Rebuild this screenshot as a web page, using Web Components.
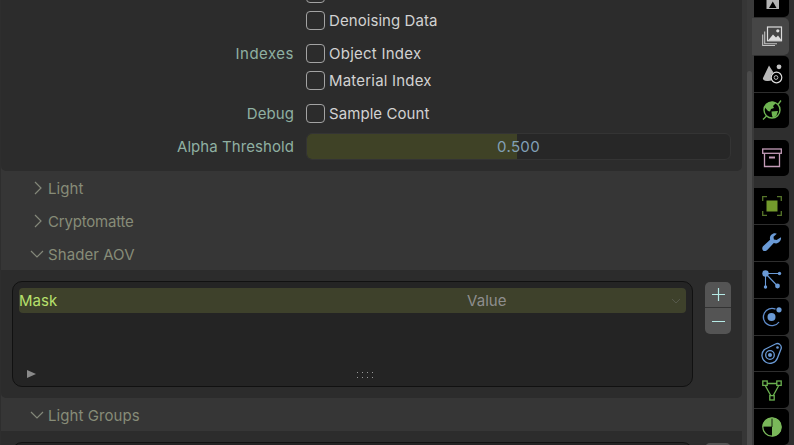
<!DOCTYPE html>
<html>
<head>
<meta charset="utf-8">
<style>
  html, body { margin: 0; height: 100%; background: #2e2e2e; overflow: hidden; }
</style>
</head>
<body>
<blender-props></blender-props>
<script>
const ICONS = {
  render: `<path d="M4.500 5h12.500v15H4.500z" fill="#b4b4b4"/><path d="M7 5h7.500l-3.700 5.500z" fill="#000"/><path d="M10.800 12.500l3.700 6.500H7z" fill="#000"/>`,
  output: `<path d="M2.700 5.500v12.300H15M.7 8.500v11H13" fill="none" stroke="#c4c4c4" stroke-width="1.100"/><rect x="5.500" y="1" width="14" height="13.800" fill="none" stroke="#dcdcdc" stroke-width="1.200"/><path d="M6 14.500l5-6 3 3 2-2 3 4v1H6z" fill="#dcdcdc"/><circle cx="15.800" cy="4.800" r="1.600" fill="#dcdcdc"/>`,
  scene: `<path d="M7 1.500 1 14c-.5 1.500 1 2.800 4 3 2 .2 3.500-.2 4.500-.7-1.300-3-.8-6 1.800-8z" fill="#b8b8b8"/><circle cx="17" cy="2.800" r="2.400" fill="#c4c4c4"/><circle cx="14.500" cy="13.500" r="5.300" fill="none" stroke="#dcdcdc" stroke-width="1.200"/><circle cx="14" cy="13.500" r="1.900" fill="none" stroke="#b8b8b8" stroke-width="1"/>`,
  world: `<circle cx="10" cy="10" r="8" fill="none" stroke="#6fb552" stroke-width="1.400"/><path d="M4 4.500c2-2 5-3 7.500-2.800l2 1.800-2.500 2.500 1 2-3 1-1 2.500-2-.5-3.500-4zM9.500 11.500l6.500-.5-1.500 4.500-3.500 2.500-1-2.500z" fill="#6fb552"/><path d="M16 4.500l3-4M1 19.500l3.500-3.500" stroke="#6fb552" stroke-width="1.300"/>`,
  collection: `<g fill="none" stroke="#c49cb8" stroke-width="1.300"><rect x=".7" y="1" width="18.600" height="4.300"/><path d="M2.500 5.500V18.500h15V5.500"/></g><rect x="7" y="8.500" width="6" height="2" fill="#c49cb8"/>`,
  object: `<rect x="4.500" y="4.500" width="11" height="11" fill="#739a2c"/><path d="M.7 5V.7H5M15 .7h4.300V5M19.300 15v4.300H15M5 19.300H.7V15" fill="none" stroke="#56752a" stroke-width="1.300"/>`,
  modifier: `<path d="M19 4.200c.5 3-1.700 6-4.900 6.200-1 0-1.700-.1-2.300-.4L5.500 16.800c-1.300 1.500-3.700 1.700-4.700.4-1-1.400-.6-3.200.8-4.400l6.500-6C7.200 3.500 9.500.3 13 .3c.8 0 1.300.2 1.800.5l-3.300 3 .4 2.600 2.700.5z" fill="#6a9ad6"/>`,
  particles: `<g stroke="#6a9ad6" stroke-width="1.100" fill="#6a9ad6"><path d="M3.500 3.500H18M3.500 3.500V17M3.500 3.500 15.500 16" fill="none"/><circle cx="3.500" cy="3.500" r="3.200" stroke="none"/><circle cx="17.500" cy="3.500" r="1.700" stroke="none"/><circle cx="3.500" cy="17" r="1.700" stroke="none"/><circle cx="15.500" cy="16" r="2.400" stroke="none"/></g>`,
  physics: `<path d="M13.500 2.200A8.600 8.600 0 1 0 17 15" fill="none" stroke="#5f8ccb" stroke-width="1.300"/><circle cx="9.500" cy="10" r="4" fill="#6a9ad6"/><circle cx="17" cy="2.800" r="2.600" fill="#6a9ad6"/>`,
  constraints: `<path d="M2.500 6.500 13.500 1a4 4 0 0 1 5.500 5L15.500 15A8 8 0 1 1 2.500 6.500z" fill="none" stroke="#6a9ad6" stroke-width="1.300"/><circle cx="8" cy="12" r="4.300" fill="none" stroke="#6a9ad6" stroke-width="1.300"/><circle cx="8" cy="12" r="2" fill="#6a9ad6"/><circle cx="15.500" cy="4.500" r="1.300" fill="#6a9ad6"/>`,
  data: `<g fill="none" stroke="#6bb150" stroke-width="1.300"><path d="M5 3.500h10M3.500 6l5.500 10M16.500 6l-5.500 10"/><rect x=".8" y="1" width="4.400" height="4.400"/><rect x="14.800" y="1" width="4.400" height="4.400"/><rect x="7.800" y="15.600" width="4.400" height="4.400"/></g>`,
  material: `<path d="M10 .5A9.500 9.500 0 0 0 .5 10H10zM10 .5A9.500 9.500 0 0 1 19.500 10H10zM19.500 10A9.500 9.500 0 0 1 10 19.500V10z" fill="#7ab85a"/><path d="M10 1v9M1 10h9" stroke="#000" stroke-width=".8"/><circle cx="10" cy="10" r="9.200" fill="none" stroke="#7ab85a" stroke-width="1.200"/>`
};

// one row: right aligned label, control on the right
class PropRow extends HTMLElement {
  constructor() {
    super();
    this.attachShadow({ mode: "open" }).innerHTML = `
      <style>
        :host { display: grid; grid-template-columns: 293px 1fr; column-gap: 12px; align-items: center; }
        .label { text-align: right; color: #8fb0a2; }
      </style>
      <div class="label"><slot name="label"></slot></div>
      <slot></slot>`;
  }
}

class PropCheck extends HTMLElement {
  constructor() {
    super();
    this.attachShadow({ mode: "open" }).innerHTML = `
      <style>
        :host { display: flex; align-items: center; gap: 4px; color: #d2d2d2; height: 19px; }
        .box { width: 17px; height: 17px; border: 1px solid #a3a3a3; border-radius: 4px; flex: none; }
      </style>
      <span class="box"></span><slot></slot>`;
  }
}

class PropSlider extends HTMLElement {
  constructor() {
    super();
    this.attachShadow({ mode: "open" }).innerHTML = `
      <style>
        :host { display: block; position: relative; height: 27px; box-sizing: border-box; border: 1px solid #343434; border-radius: 6px; background: #272727; overflow: hidden; }
        .fill { height: 100%; width: 210px; background: #3f4226; }
        .value { position: absolute; inset: 0; display: flex; align-items: center; justify-content: center; color: #82a0b6; letter-spacing: .35px; }
      </style>
      <div class="fill"></div><div class="value"><slot></slot></div>`;
  }
}

class PanelHeader extends HTMLElement {
  constructor() {
    super();
    const open = this.hasAttribute("open");
    this.attachShadow({ mode: "open" }).innerHTML = `
      <style>
        :host { display: flex; align-items: center; height: 33px; box-sizing: border-box; padding: 1px 0 0 29px; color: #878c78; }
        svg { width: 14px; height: 14px; margin-right: 4px; flex: none; }
      </style>
      <svg viewBox="0 0 14 14"><path d="${open ? "M1 4l6 6 6-6" : "M5 1l6 6-6 6"}" fill="none" stroke="#84887a" stroke-width="1.200"/></svg>
      <slot></slot>`;
  }
}

class ListButtons extends HTMLElement {
  constructor() {
    super();
    this.attachShadow({ mode: "open" }).innerHTML = `
      <style>
        :host { display: block; width: 26px; flex: none; margin-top: 1px; border-radius: 5px; overflow: hidden; background: #545454; }
        .btn { height: 25px; display: flex; align-items: center; justify-content: center; }
        .btn + .btn { border-top: 1px solid #333; height: 26px; }
        svg { width: 13px; height: 13px; }
      </style>
      <div class="btn"><svg viewBox="0 0 13 13"><path d="M6.500 0v13M0 6.500h13" stroke="#b6ebe6" stroke-width="1.200"/></svg></div>
      <div class="btn"><svg viewBox="0 0 13 13"><path d="M0 6.500h13" stroke="#b6ebe6" stroke-width="1.200"/></svg></div>`;
  }
}

class AovList extends HTMLElement {
  constructor() {
    super();
    this.attachShadow({ mode: "open" }).innerHTML = `
      <style>
        :host { display: flex; align-items: flex-start; gap: 12px; padding: 11px; background: #2c2c2c; border-radius: 0 0 5px 5px; }
        .box { position: relative; flex: 1; height: 106px; box-sizing: border-box; border: 1px solid #111; border-radius: 10px; background: #242424; padding: 6px; }
        .row { position: relative; display: flex; align-items: center; height: 25px; background: #3e412b; border-radius: 4px; color: #b7e06c; }
        .value { position: absolute; left: 448px; color: #8e8e8e; }
        .row svg { position: absolute; right: 5px; top: 10px; }
        .expand { position: absolute; left: 14px; bottom: 8px; width: 0; height: 0; border-left: 9px solid #8a8a8a; border-top: 4.500px solid transparent; border-bottom: 4.500px solid transparent; }
        .grip { position: absolute; left: 342px; bottom: 6px; width: 20px; height: 10px; background: radial-gradient(circle, #9a9a9a 0.6px, transparent 1px) 0 0 / 5px 5px; }
      </style>
      <div class="box">
        <div class="row"><slot name="name"></slot><span class="value"><slot name="value"></slot></span>
          <svg width="10" height="6" viewBox="0 0 10 6"><path d="M1 1l4 4 4-4" fill="none" stroke="#55584a" stroke-width="1"/></svg>
        </div>
        <span class="expand"></span><span class="grip"></span>
      </div>
      <list-buttons></list-buttons>`;
  }
}

class PropTab extends HTMLElement {
  constructor() {
    super();
    const icon = ICONS[this.getAttribute("icon")];
    this.attachShadow({ mode: "open" }).innerHTML = `
      <style>
        :host { display: flex; align-items: center; justify-content: center; width: 35px; height: 36px; box-sizing: border-box; background: #000; border-radius: 0 5px 5px 0; }
        :host([active]) { background: #464646; height: 37px; margin-left: -2px; width: 37px; padding-left: 2px; }
        svg { width: 20px; height: 20px; overflow: visible; }
      </style>
      <svg viewBox="0 0 20 20">${icon}</svg>`;
  }
}

class TabBar extends HTMLElement {
  constructor() {
    super();
    this.attachShadow({ mode: "open" }).innerHTML = `
      <style>
        :host { display: flex; flex-direction: column; gap: 1px; margin-top: -19px; width: 40px; flex: none; }
      </style>
      <slot></slot>`;
  }
}

class BlenderProps extends HTMLElement {
  constructor() {
    super();
    this.attachShadow({ mode: "open" }).innerHTML = `
      <style>
        :host { display: flex; height: 445px; width: 794px; overflow: hidden; background: #2e2e2e; font: 15px/19px Inter, "Liberation Sans", sans-serif; letter-spacing: .07px; }
        .main { width: 741px; margin-left: 1px; flex: none; background: #363636; height: 445px; overflow: hidden; }
        .body { display: flow-root; height: 171px; box-sizing: border-box; padding: 0 11px 0 0; background: #2c2c2c; border-radius: 0 0 5px 5px; }
        prop-row { margin-bottom: 8px; }
        prop-row.debug { margin-bottom: 10px; }
        .first { margin-top: -16px; }
        .scroll { width: 12px; flex: none; display: flex; background: #363636; }
        .track { margin-left: 5px; width: 7px; background: #3a3a3a; }
        .thumb { margin-top: 71px; height: 374px; width: 5px; background: #4b4b4b; border-radius: 3px 3px 0 0; }
        .next { display: flex; align-items: flex-start; gap: 12px; height: 14px; padding: 11px 11px 0; background: #2c2c2c; }
        .next .box { flex: 1; height: 40px; box-sizing: border-box; border: 1px solid #111; border-radius: 10px; background: #242424; }
      </style>
      <div class="main">
        <div class="body">
          <prop-check class="first" style="margin-left:305px">Vector</prop-check>
          <prop-check style="margin:8px 0 14px 305px">Denoising Data</prop-check>
          <prop-row><span slot="label" style="letter-spacing:.5px">Indexes</span><prop-check><span style="letter-spacing:.25px">Object Index</span></prop-check></prop-row>
          <prop-check style="margin:0 0 14px 305px"><span style="letter-spacing:.2px">Material Index</span></prop-check>
          <prop-row class="debug"><span slot="label">Debug</span><prop-check>Sample Count</prop-check></prop-row>
          <prop-row><span slot="label">Alpha Threshold</span><prop-slider>0.500</prop-slider></prop-row>
        </div>
        <panel-header>Light</panel-header>
        <panel-header><span style="letter-spacing:-.2px">Cryptomatte</span></panel-header>
        <panel-header open>Shader AOV</panel-header>
        <aov-list><span slot="name">Mask</span><span slot="value">Value</span></aov-list>
        <panel-header open>Light Groups</panel-header>
        <div class="next"><div class="box"></div><list-buttons></list-buttons></div>
      </div>
      <div class="scroll"><div class="track"><div class="thumb"></div></div></div>
      <tab-bar>
        <prop-tab icon="render"></prop-tab>
        <prop-tab icon="output" active></prop-tab>
        <prop-tab icon="scene"></prop-tab>
        <prop-tab icon="world"></prop-tab>
        <div style="height:10px"></div>
        <prop-tab icon="collection"></prop-tab>
        <div style="height:10px"></div>
        <prop-tab icon="object"></prop-tab>
        <prop-tab icon="modifier"></prop-tab>
        <prop-tab icon="particles"></prop-tab>
        <prop-tab icon="physics"></prop-tab>
        <prop-tab icon="constraints"></prop-tab>
        <prop-tab icon="data"></prop-tab>
        <prop-tab icon="material"></prop-tab>
      </tab-bar>`;
  }
}

customElements.define("prop-row", PropRow);
customElements.define("prop-check", PropCheck);
customElements.define("prop-slider", PropSlider);
customElements.define("panel-header", PanelHeader);
customElements.define("list-buttons", ListButtons);
customElements.define("aov-list", AovList);
customElements.define("prop-tab", PropTab);
customElements.define("tab-bar", TabBar);
customElements.define("blender-props", BlenderProps);
</script>
</body>
</html>
